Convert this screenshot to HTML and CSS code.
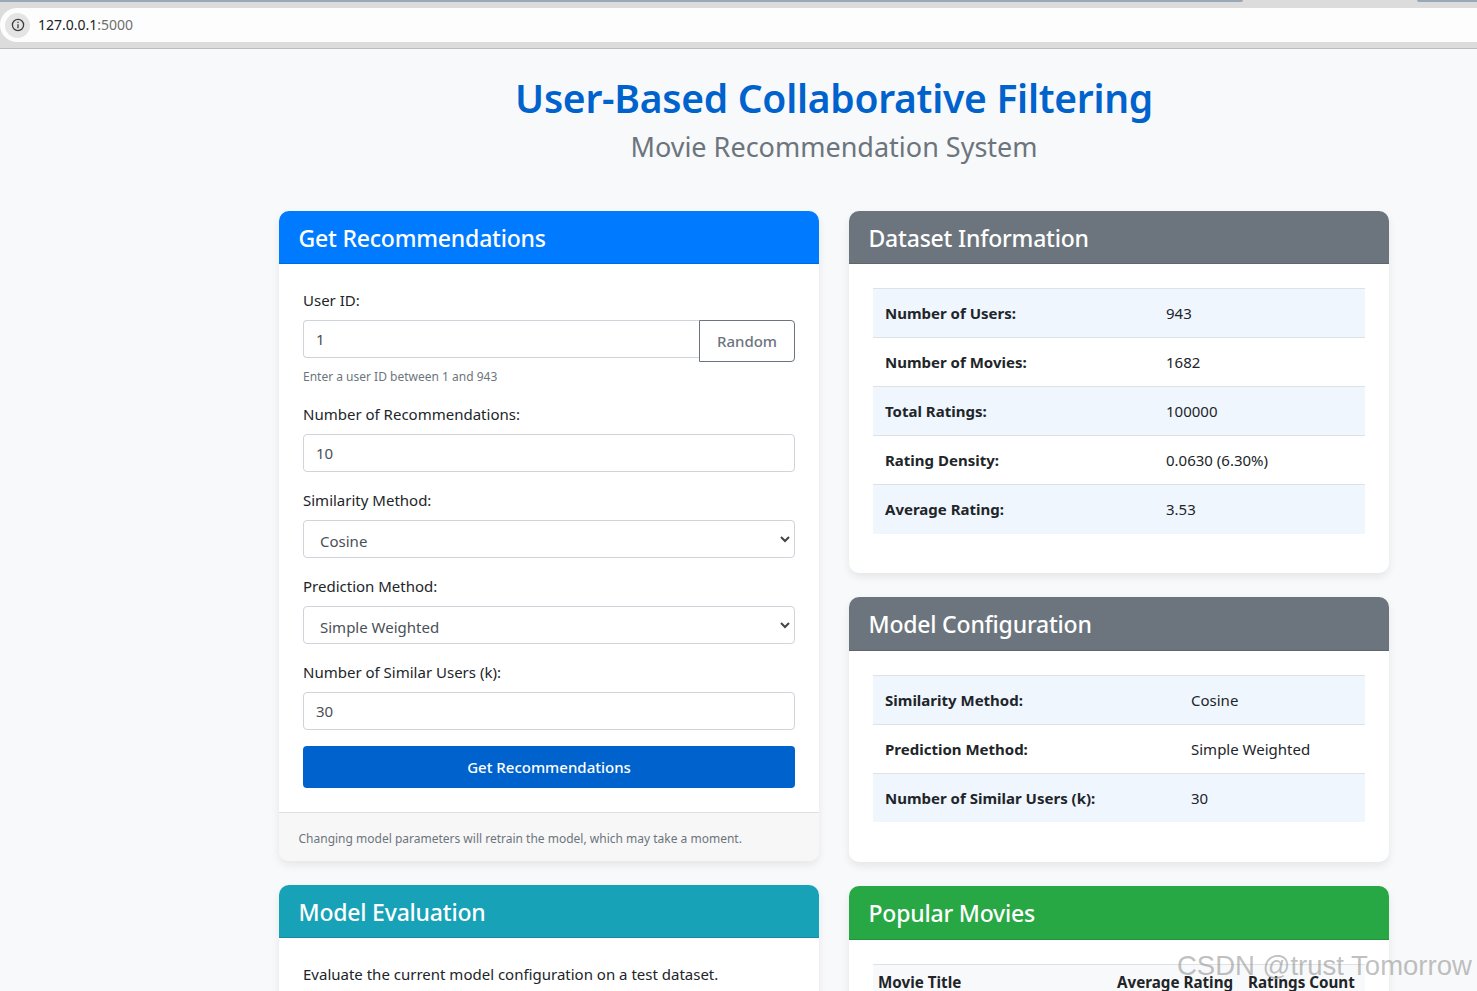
FILE: index.html
```html
<!DOCTYPE html>
<html lang="en">
<head>
<meta charset="utf-8">
<title>Movie Recommendation System</title>
<link rel="stylesheet" href="styles.css">
</head>
<body>
<div class="chrome">
  <div class="tabstrip"><div class="tab-a"></div><div class="tab-b"></div></div>
  <div class="omnibox">
    <span class="site-info"><svg width="14" height="14" viewBox="0 0 14 14" fill="none" stroke="#3c3c3c" stroke-width="1.3"><circle cx="7" cy="7" r="5.6"/><path d="M7 6.2v4M7 3.8v1.3"/></svg></span>
    <span class="url">127.0.0.1<span class="port">:5000</span></span>
  </div>
</div>
<main class="page">
  <header class="head">
    <h1>User-Based Collaborative Filtering</h1>
    <p class="sub">Movie Recommendation System</p>
  </header>
  <div class="columns">
    <div class="col">
      <section class="card">
        <h2 class="card-h blue">Get Recommendations</h2>
        <form class="card-b">
          <div class="field">
            <label>User ID:</label>
            <div class="group"><div class="input grow">1</div><div class="rand">Random</div></div>
            <small>Enter a user ID between 1 and 943</small>
          </div>
          <div class="field"><label>Number of Recommendations:</label><div class="input">10</div></div>
          <div class="field"><label>Similarity Method:</label><div class="input select">Cosine<svg class="chev" width="10" height="7" viewBox="0 0 10 7" fill="none" stroke="#444" stroke-width="2"><path d="M1 1l4 4 4-4"/></svg></div></div>
          <div class="field"><label>Prediction Method:</label><div class="input select">Simple Weighted<svg class="chev" width="10" height="7" viewBox="0 0 10 7" fill="none" stroke="#444" stroke-width="2"><path d="M1 1l4 4 4-4"/></svg></div></div>
          <div class="field"><label>Number of Similar Users (k):</label><div class="input">30</div></div>
          <div class="submit">Get Recommendations</div>
        </form>
        <div class="card-f">Changing model parameters will retrain the model, which may take a moment.</div>
      </section>
      <section class="card">
        <h2 class="card-h teal">Model Evaluation</h2>
        <div class="card-b"><p class="plain">Evaluate the current model configuration on a test dataset.</p></div>
      </section>
    </div>
    <div class="col">
      <section class="card">
        <h2 class="card-h gray">Dataset Information</h2>
        <div class="card-b table-b">
          <table class="info t1">
            <tr><th>Number of Users:</th><td>943</td></tr>
            <tr><th>Number of Movies:</th><td>1682</td></tr>
            <tr><th>Total Ratings:</th><td>100000</td></tr>
            <tr><th>Rating Density:</th><td>0.0630 (6.30%)</td></tr>
            <tr><th>Average Rating:</th><td>3.53</td></tr>
          </table>
        </div>
      </section>
      <section class="card">
        <h2 class="card-h gray tall">Model Configuration</h2>
        <div class="card-b table-b wide-end">
          <table class="info t2">
            <tr><th>Similarity Method:</th><td>Cosine</td></tr>
            <tr><th>Prediction Method:</th><td>Simple Weighted</td></tr>
            <tr><th>Number of Similar Users (k):</th><td>30</td></tr>
          </table>
        </div>
      </section>
      <section class="card">
        <h2 class="card-h green tall">Popular Movies</h2>
        <div class="card-b">
          <table class="movies">
            <tr><th class="m1">Movie Title</th><th class="m2">Average Rating</th><th class="m3">Ratings Count</th></tr>
          </table>
        </div>
      </section>
    </div>
  </div>
</main>
<div class="mark">CSDN @trust Tomorrow</div>
</body>
</html>
```
FILE: styles.css
```css
* { box-sizing: border-box; }
html, body { margin: 0; height: 991px; overflow: hidden; }
body {
  background: #f8f9fa;
  color: #212529;
  font-family: "Noto Sans", "Open Sans", sans-serif;
  font-size: 15px;
  position: relative;
}
.chrome {
  height: 49px;
  background: #dcdcdc;
  border-bottom: 1px solid #bdbdbd;
}
.tabstrip { height: 8px; display: flex; justify-content: space-between; }
.tab-a { width: 1243px; height: 2px; background: #9aa7b4; border-bottom-right-radius: 4px; }
.tab-b { width: 60px; height: 2px; background: #9aa7b4; border-bottom-left-radius: 4px; }
.omnibox {
  height: 34px;
  background: #fdfdfd;
  border-radius: 17px 0 0 17px;
  display: flex;
  align-items: center;
  padding-left: 5px;
}
.site-info {
  width: 25px; height: 25px; border-radius: 50%;
  background: #e4e4e4;
  display: flex; align-items: center; justify-content: center;
}
.url { margin-left: 8px; padding-bottom: 2px; font-size: 14px; color: #202124; }
.port { color: #6f6f6f; }
.page { width: 1140px; margin-left: 264px; padding: 0 15px; }
.head { text-align: center; padding-top: 23px; height: 162px; }
h1 { margin: 0; color: #0062cc; font-size: 39px; font-weight: 600; line-height: 52px; letter-spacing: -0.27px; }
.sub { margin: 5px 0 0; color: #6c757d; font-size: 27px; line-height: 36px; }
.columns { display: flex; gap: 30px; }
.col { width: 540px; display: flex; flex-direction: column; gap: 24px; }
.card {
  background: #fff;
  border-radius: 10px;
  box-shadow: 0 4px 8px rgba(0,0,0,.08);
  overflow: hidden;
}
.card-h {
  margin: 0;
  height: 53px;
  padding: 0 20px 0 19.5px;
  color: #fff;
  font-size: 23px;
  font-weight: 500;
  line-height: 54px;
  letter-spacing: -0.2px;
  border-bottom: 1px solid rgba(0,0,0,.125);
}
.card-h.tall { height: 54px; }
.blue { background: #007bff; }
.teal { background: #17a2b8; }
.gray { background: #6c757d; }
.green { background: #28a745; }
.card-b { padding: 24px; }
.field { margin-bottom: 16px; }
label { display: block; height: 24px; line-height: 24px; margin-bottom: 8px; }
.input {
  height: 38px;
  border: 1px solid #ced4da;
  border-radius: 4px;
  padding: 0 12px;
  line-height: 36px;
  color: #495057;
  position: relative;
}
.group { display: flex; height: 42px; }
.grow { flex: 1; border-right: 0; border-radius: 4px 0 0 4px; }
.rand {
  width: 96px; height: 42px;
  border: 1px solid #6c757d;
  border-radius: 0 4px 4px 0;
  color: #6c757d;
  text-align: center;
  line-height: 40px;
  font-weight: 500;
}
small { display: block; margin-top: 6px; font-size: 12px; color: #6c757d; line-height: 18px; height: 18px; }
.select { padding-left: 16px; line-height: 41px; }
.chev { position: absolute; right: 4px; top: 15px; }
.submit {
  height: 42px;
  background: #0062cc;
  color: #fff;
  border-radius: 4px;
  text-align: center;
  line-height: 42px;
  font-weight: 500;
}
.card-f {
  height: 49px;
  background: #f7f7f7;
  border-top: 1px solid #dfdfdf;
  padding: 0 20px 0 19.5px;
  line-height: 52px;
  font-size: 12px;
  color: #6c757d;
}
.plain { margin: 0; line-height: 24px; }
.table-b { padding-bottom: 39px; }
.wide-end { padding-bottom: 40px; }
table { border-collapse: collapse; width: 100%; }
.info tr { height: 49px; border-top: 1px solid #dee2e6; }
.info tr:nth-child(odd) { background: #f0f6fe; }
.info th { text-align: left; font-weight: 700; padding: 0 12px; }
.info td { padding: 0 12px; }
.t1 th { width: 281px; }
.t2 th { width: 306px; }
.movies tr { border-top: 1px solid #dee2e6; background: #f8f9fa; height: 49px; }
.movies th { text-align: left; padding: 0 5px 14px; font-size: 15.2px; font-weight: 700; white-space: nowrap; }
.m1 { width: 239px; }
.m2 { width: 131px; }
.mark {
  position: absolute;
  left: 1177px; top: 947px;
  font-family: "Liberation Sans", sans-serif;
  font-size: 27.5px;
  line-height: 38px;
  color: rgba(130,130,130,.5);
  white-space: nowrap;
}
```
